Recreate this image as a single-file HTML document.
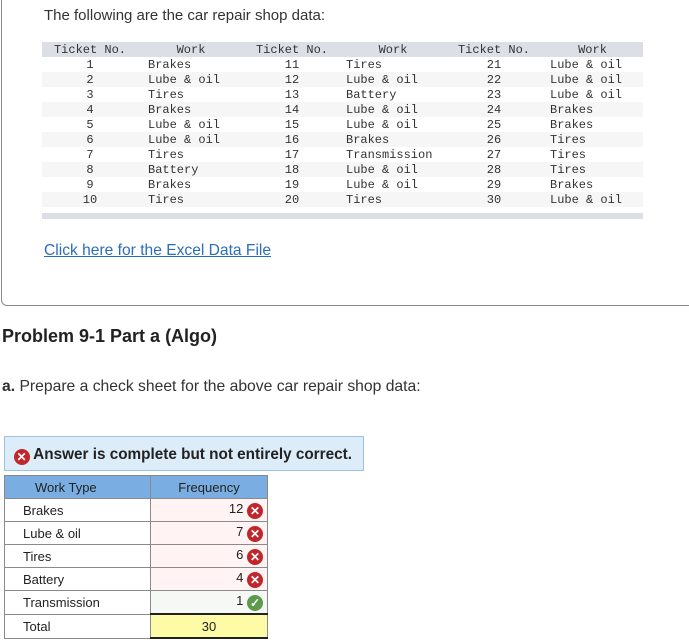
<!DOCTYPE html>
<html><head><style>
body{margin:0;width:689px;height:644px;background:#fff;font-family:"Liberation Sans",sans-serif;position:relative;overflow:hidden;color:#222}
.box{position:absolute;left:1px;top:-10px;width:700px;height:314px;border:1px solid #8a8a8a;border-radius:6px}
.t1{position:absolute;left:44px;top:7px;font-size:15px;color:#333}
table.d{position:absolute;left:42px;top:42px;border-collapse:collapse;font-family:"Liberation Mono",monospace;font-size:12px;color:#333;width:601px}
table.d td,table.d th{height:14px;padding:1px 0 0 0;line-height:14px;font-weight:normal}
table.d th{background:#dcdfe6}
table.d tr:nth-child(odd) td{background:#f6f6f6}
.c{text-align:center}
.bar{position:absolute;left:42px;top:213px;width:601px;height:6px;background:#dcdfe6}
.link{position:absolute;left:44px;top:242px;font-size:15.6px;color:#2a6ebb;text-decoration:underline}
h2{position:absolute;left:2px;top:326px;margin:0;font-size:18px;font-weight:bold;color:#222}
.q{position:absolute;left:2px;top:378px;font-size:15.7px;color:#333}
.ban{position:absolute;left:4px;top:436px;width:358px;height:33px;background:#dcecf9;border:1px solid #9cc3e5;font-weight:bold;font-size:15.3px;line-height:35px;white-space:nowrap}
.x{display:inline-block;width:16px;height:16px;border-radius:50%;background:#c0272d;color:#fff;font-size:12px;line-height:16px;text-align:center;font-weight:bold;vertical-align:-2px}
.ok{background:#5d9a4e}
table.a{position:absolute;left:4px;top:475px;border-collapse:collapse;font-size:13px;color:#222}
table.a td{border:1px solid #8a8a8a;height:22px;padding:0}
table.a tr.h td{background:#7aade2;height:22px}
</style></head><body>
<div class="box"></div>
<div class="t1">The following are the car repair shop data:</div>
<table class="d">
<tr><th style="width:96px">Ticket No.</th><th style="width:106px">Work</th><th style="width:96px">Ticket No.</th><th style="width:106px">Work</th><th style="width:96px">Ticket No.</th><th>Work</th></tr>
<tr><td class="c">1</td><td style="padding-left:10px">Brakes</td><td class="c">11</td><td style="padding-left:6px">Tires</td><td class="c">21</td><td style="padding-left:8px">Lube &amp; oil</td></tr>
<tr><td class="c">2</td><td style="padding-left:10px">Lube &amp; oil</td><td class="c">12</td><td style="padding-left:6px">Lube &amp; oil</td><td class="c">22</td><td style="padding-left:8px">Lube &amp; oil</td></tr>
<tr><td class="c">3</td><td style="padding-left:10px">Tires</td><td class="c">13</td><td style="padding-left:6px">Battery</td><td class="c">23</td><td style="padding-left:8px">Lube &amp; oil</td></tr>
<tr><td class="c">4</td><td style="padding-left:10px">Brakes</td><td class="c">14</td><td style="padding-left:6px">Lube &amp; oil</td><td class="c">24</td><td style="padding-left:8px">Brakes</td></tr>
<tr><td class="c">5</td><td style="padding-left:10px">Lube &amp; oil</td><td class="c">15</td><td style="padding-left:6px">Lube &amp; oil</td><td class="c">25</td><td style="padding-left:8px">Brakes</td></tr>
<tr><td class="c">6</td><td style="padding-left:10px">Lube &amp; oil</td><td class="c">16</td><td style="padding-left:6px">Brakes</td><td class="c">26</td><td style="padding-left:8px">Tires</td></tr>
<tr><td class="c">7</td><td style="padding-left:10px">Tires</td><td class="c">17</td><td style="padding-left:6px">Transmission</td><td class="c">27</td><td style="padding-left:8px">Tires</td></tr>
<tr><td class="c">8</td><td style="padding-left:10px">Battery</td><td class="c">18</td><td style="padding-left:6px">Lube &amp; oil</td><td class="c">28</td><td style="padding-left:8px">Tires</td></tr>
<tr><td class="c">9</td><td style="padding-left:10px">Brakes</td><td class="c">19</td><td style="padding-left:6px">Lube &amp; oil</td><td class="c">29</td><td style="padding-left:8px">Brakes</td></tr>
<tr><td class="c">10</td><td style="padding-left:10px">Tires</td><td class="c">20</td><td style="padding-left:6px">Tires</td><td class="c">30</td><td style="padding-left:8px">Lube &amp; oil</td></tr>
</table>
<div class="bar"></div>
<div class="link">Click here for the Excel Data File</div>
<h2>Problem 9-1 Part a (Algo)</h2>
<div class="q"><b>a.</b> Prepare a check sheet for the above car repair shop data:</div>
<div class="ban">&nbsp;&nbsp;<span class="x">✕</span> Answer is complete but not entirely correct.</div>
<table class="a">
<tr class="h"><td style="padding-left:30px;width:115px">Work Type</td><td style="width:116px;text-align:center">Frequency</td></tr>
<tr><td style="padding-left:18px">Brakes</td><td style="background:#fff4f3;text-align:right;padding-right:4px">12 <span class="x">✕</span></td></tr>
<tr><td style="padding-left:18px">Lube &amp; oil</td><td style="background:#fff4f3;text-align:right;padding-right:4px">7 <span class="x">✕</span></td></tr>
<tr><td style="padding-left:18px">Tires</td><td style="background:#fff4f3;text-align:right;padding-right:4px">6 <span class="x">✕</span></td></tr>
<tr><td style="padding-left:18px">Battery</td><td style="background:#fff4f3;text-align:right;padding-right:4px">4 <span class="x">✕</span></td></tr>
<tr><td style="padding-left:18px">Transmission</td><td style="background:#f5f8f4;text-align:right;padding-right:4px">1 <span class="x ok">✓</span></td></tr>
<tr><td style="padding-left:18px">Total</td><td style="background:#fdfba6;text-align:center;border-top:2px solid #222;border-bottom:2px solid #222">30</td></tr>
</table>
</body></html>
